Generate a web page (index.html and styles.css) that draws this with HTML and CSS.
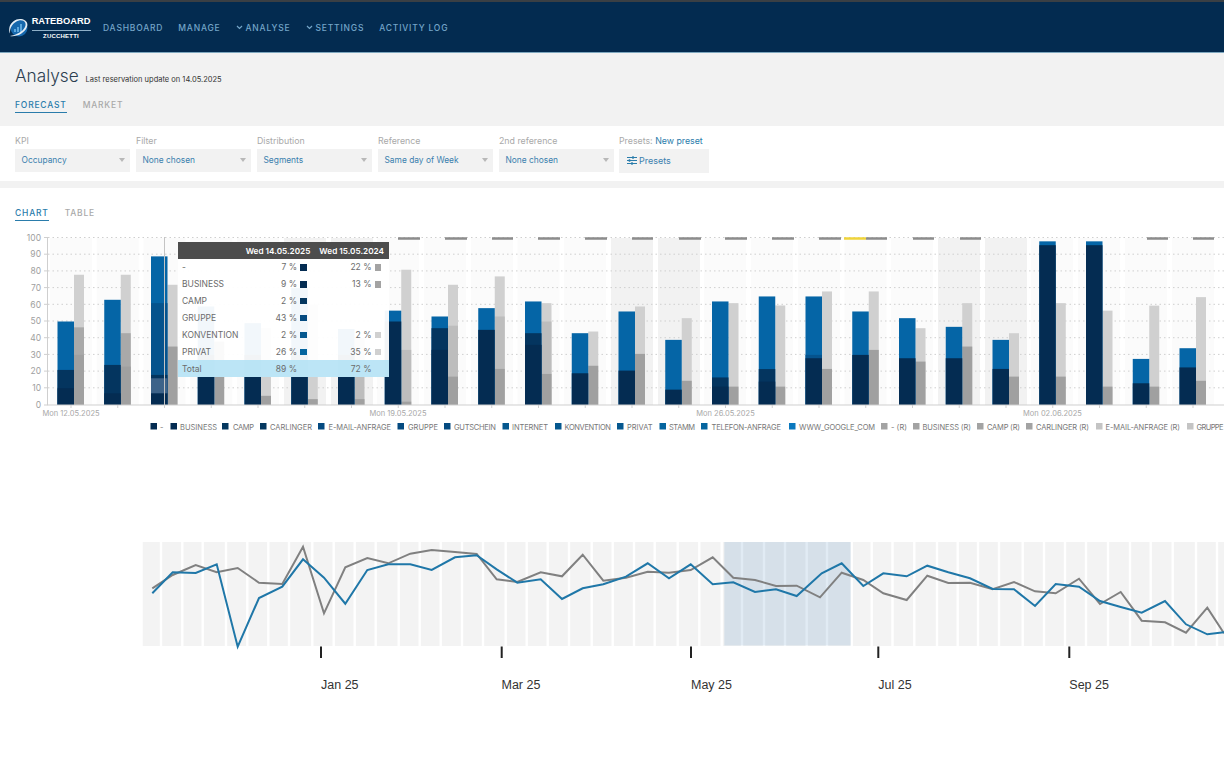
FILE: index.html
```html
<!DOCTYPE html>
<html lang="en">
<head>
<meta charset="utf-8">
<title>Rateboard – Analyse</title>
<link rel="stylesheet" href="styles.css">
</head>
<body>
<nav class="topbar">
  <div class="logo">
    <svg class="logo-mark" viewBox="0 0 22 22" width="22" height="22">
      <circle cx="11" cy="11" r="8.5" class="orb"/>
      <path d="M6 15v-3h2v3zM9 15v-5h2v5zM12 15V7h2v8z" class="orb-bars"/>
      <path d="M2 19C8 20 16 17 19 10 20.500 6 18 2.500 13 2 8 1.500 3 5 1.500 10 1 12 1 15 2 16.500 1.500 11 5 5 11 3.500 16 2.500 19 6 17 10 14.500 15 8 18 2 19z" class="swoosh"/>
    </svg>
    <div class="logo-text">
      <span class="logo-name">RATEBOARD</span>
      <span class="logo-sub">ZUCCHETTI</span>
    </div>
  </div>
  <ul class="menu">
    <li class="menu-item">DASHBOARD</li>
    <li class="menu-item">MANAGE</li>
    <li class="menu-item"><svg class="chev" viewBox="0 0 7 5" width="7" height="5"><path d="M1 1l2.500 2.500L6 1"/></svg>ANALYSE</li>
    <li class="menu-item"><svg class="chev" viewBox="0 0 7 5" width="7" height="5"><path d="M1 1l2.500 2.500L6 1"/></svg>SETTINGS</li>
    <li class="menu-item">ACTIVITY LOG</li>
  </ul>
</nav>

<header class="page-head">
  <div class="title-row">
    <h1 class="title">Analyse</h1>
    <span class="updated">Last reservation update on 14.05.2025</span>
  </div>
  <div class="tabs">
    <span class="tab active">FORECAST</span>
    <span class="tab">MARKET</span>
  </div>
</header>

<section class="filters">
  <div class="field"><label class="field-label">KPI</label><div class="select">Occupancy<i class="caret"></i></div></div>
  <div class="field"><label class="field-label">Filter</label><div class="select">None chosen<i class="caret"></i></div></div>
  <div class="field"><label class="field-label">Distribution</label><div class="select">Segments<i class="caret"></i></div></div>
  <div class="field"><label class="field-label">Reference</label><div class="select">Same day of Week<i class="caret"></i></div></div>
  <div class="field"><label class="field-label">2nd reference</label><div class="select">None chosen<i class="caret"></i></div></div>
  <div class="field presets"><label class="field-label">Presets: <a class="link">New preset</a></label>
    <div class="preset-btn">
      <svg class="sliders" viewBox="0 0 10 9" width="10" height="9"><path d="M0 1.500h10M0 4.500h10M0 7.500h10"/><path class="knob" d="M6 .3v2.400M2.500 3.300v2.400M5 6.300v2.400"/></svg>
      Presets
    </div>
  </div>
</section>
<div class="band"></div>

<div class="tabs chart-tabs">
  <span class="tab active">CHART</span>
  <span class="tab">TABLE</span>
</div>

<section class="chart">
  <svg class="bars" viewBox="0 228 1224 208" width="1224" height="208">
    <g transform="translate(0 405) scale(1 -1.67)">
      <g class="cols">
        <rect x="50" width="42" height="100"/><rect x="96.750" width="42" height="100"/><rect x="143.500" width="42" height="100"/><rect x="190.250" width="42" height="100"/><rect x="237" width="42" height="100"/>
        <rect class="wk" x="284" width="42" height="100"/><rect class="wk" x="331" width="42" height="100"/>
        <rect x="377" width="42" height="100"/><rect x="424" width="42" height="100"/><rect x="471" width="42" height="100"/><rect x="517.500" width="42" height="100"/><rect x="564" width="42" height="100"/>
        <rect class="wk" x="611" width="42" height="100"/><rect class="wk" x="658" width="42" height="100"/>
        <rect x="704" width="42" height="100"/><rect x="751" width="42" height="100"/><rect x="798" width="42" height="100"/><rect x="844.500" width="42" height="100"/><rect x="891" width="42" height="100"/>
        <rect class="wk" x="938" width="42" height="100"/><rect class="wk" x="985" width="42" height="100"/>
        <rect x="1031" width="42" height="100"/><rect x="1078" width="42" height="100"/><rect x="1125" width="42" height="100"/><rect x="1172" width="42" height="100"/>
      </g>
    </g>
    <g class="grid">
      <path d="M48 237.500H1224M48 254.200H1224M48 270.900H1224M48 287.600H1224M48 304.300H1224M48 321H1224M48 337.700H1224M48 354.400H1224M48 371.100H1224M48 387.800H1224"/>
    </g>
    <g transform="translate(0 405) scale(1 -1.67)">
      <g transform="translate(71)"><rect class="r rl" height="78"/><rect class="r rn" height="46.500"/><rect class="r rm" height="30"/><rect class="m c3" height="50"/><rect class="m c1b" height="21"/><rect class="m c1" height="10"/></g>
      <g transform="translate(117.750)"><rect class="r rl" height="78"/><rect class="r rn" height="43"/><rect class="r rm" height="23"/><rect class="m c3" height="63"/><rect class="m c1b" height="24"/><rect class="m c1" height="7"/></g>
      <g transform="translate(164.500)"><rect class="r rl" height="72"/><rect class="r rm" height="35"/><rect class="m c3" height="89"/><rect class="m c2" height="61"/><rect class="m c1b" height="18"/><rect class="m c-p" height="16"/><rect class="m c1" height="7"/></g>
      <g transform="translate(211.250)"><rect class="r rm" height="38"/><rect class="m c3" height="59"/><rect class="m c1" height="30"/></g>
      <g transform="translate(258)"><rect class="r rl" height="46"/><rect class="r rm" height="5.500"/><rect class="m c3" height="49"/><rect class="m c1" height="30"/></g>
      <g transform="translate(304.750)"><rect class="r rl" height="60"/><rect class="r rm" height="3.500"/><rect class="m c3" height="70"/><rect class="m c1" height="30"/></g>
      <g transform="translate(351.500)"><rect class="r rs" height="40"/><rect class="r rm" height="3.500"/><rect class="m c3" height="45.500"/><rect class="m c1" height="30"/></g>
      <g transform="translate(398.250)"><rect class="r rl" height="81"/><rect class="r rs" height="33"/><rect class="r rm" height="2"/><rect class="m c3" height="56.500"/><rect class="m c1" height="50"/></g>
      <g transform="translate(445)"><rect class="r rl" height="72"/><rect class="r rs" height="47.500"/><rect class="r rm" height="17"/><rect class="m c3" height="53"/><rect class="m c1b" height="46"/><rect class="m c1" height="33"/></g>
      <g transform="translate(491.750)"><rect class="r rl" height="77"/><rect class="r rs" height="53"/><rect class="r rm" height="21.600"/><rect class="m c3" height="58"/><rect class="m c1" height="45"/></g>
      <g transform="translate(538.500)"><rect class="r rl" height="61"/><rect class="r rs" height="50"/><rect class="r rm" height="18.600"/><rect class="m c3" height="62"/><rect class="m c1b" height="43"/><rect class="m c1" height="36"/></g>
      <g transform="translate(585.250)"><rect class="r rl" height="44"/><rect class="r rm" height="23.500"/><rect class="m c3" height="43"/><rect class="m c1" height="19"/></g>
      <g transform="translate(632)"><rect class="r rl" height="59"/><rect class="r rm" height="30.600"/><rect class="m c3" height="56"/><rect class="m c1" height="20.600"/></g>
      <g transform="translate(678.750)"><rect class="r rl" height="52"/><rect class="r rm" height="14.500"/><rect class="m c3" height="39"/><rect class="m c1" height="9.200"/></g>
      <g transform="translate(725.500)"><rect class="r rl" height="61"/><rect class="r rm" height="11"/><rect class="m c3" height="62"/><rect class="m c1b" height="16.500"/><rect class="m c1" height="11"/></g>
      <g transform="translate(772.250)"><rect class="r rl" height="59.600"/><rect class="r rm" height="11"/><rect class="m c3" height="65"/><rect class="m c1b" height="21.500"/><rect class="m c1" height="14"/></g>
      <g transform="translate(819)"><rect class="r rl" height="68"/><rect class="r rm" height="21.600"/><rect class="m c3" height="65"/><rect class="m c2" height="30"/><rect class="m c1" height="28"/></g>
      <g transform="translate(865.750)"><rect class="r rl" height="68"/><rect class="r rm" height="33"/><rect class="m c3" height="56"/><rect class="m c1" height="30"/></g>
      <g transform="translate(912.500)"><rect class="r rl" height="46"/><rect class="r rm" height="26"/><rect class="m c3" height="52"/><rect class="m c1" height="28"/></g>
      <g transform="translate(959.250)"><rect class="r rl" height="61"/><rect class="r rm" height="35"/><rect class="m c3" height="46.800"/><rect class="m c1" height="28"/></g>
      <g transform="translate(1006)"><rect class="r rl" height="43"/><rect class="r rm" height="17"/><rect class="m c3" height="39"/><rect class="m c1" height="21.600"/></g>
      <g transform="translate(1052.750)"><rect class="r rl" height="61"/><rect class="r rm" height="17"/><rect class="m c3" height="98"/><rect class="m c1" height="95.700"/></g>
      <g transform="translate(1099.500)"><rect class="r rl" height="56.500"/><rect class="r rm" height="11"/><rect class="m c3" height="98"/><rect class="m c1" height="95.700"/></g>
      <g transform="translate(1146.250)"><rect class="r rl" height="59.500"/><rect class="r rm" height="11"/><rect class="m c3" height="27.600"/><rect class="m c1" height="13"/></g>
      <g transform="translate(1193)"><rect class="r rl" height="64.600"/><rect class="r rm" height="14.500"/><rect class="m c3" height="34"/><rect class="m c1" height="22.500"/></g>
    </g>
    <path class="hover-line" d="M164.500 237V405"/>
    <path class="flags" d="M398 238.500h22M445 238.500h22M492 238.500h21M538 238.500h22M585 238.500h22M632 238.500h21M679 238.500h22M725 238.500h22M772 238.500h22M819 238.500h22M866 238.500h21M913 238.500h21M960 238.500h21M1147 238.500h21M1193 238.500h21"/>
    <path class="flag-y" d="M844 238.500h22"/>
    <path class="axis" d="M47.500 237V405H1224M44 237.500h4M44 254.200h4M44 270.900h4M44 287.600h4M44 304.300h4M44 321h4M44 337.700h4M44 354.400h4M44 371.100h4M44 387.800h4M44 405h4"/>
    <path class="axis" d="M71 405v3M117.750 405v3M164.500 405v3M211.250 405v3M258 405v3M304.750 405v3M351.500 405v3M398.250 405v3M445 405v3M491.750 405v3M538.500 405v3M585.250 405v3M632 405v3M678.750 405v3M725.500 405v3M772.250 405v3M819 405v3M865.750 405v3M912.500 405v3M959.250 405v3M1006 405v3M1052.750 405v3M1099.500 405v3M1146.250 405v3M1193 405v3"/>
    <g class="ylab">
      <text x="41" y="240.500">100</text><text x="41" y="257">90</text><text x="41" y="274">80</text><text x="41" y="291">70</text><text x="41" y="307.500">60</text><text x="41" y="324">50</text><text x="41" y="341">40</text><text x="41" y="357.500">30</text><text x="41" y="374">20</text><text x="41" y="391">10</text><text x="41" y="408">0</text>
    </g>
    <g class="xlab">
      <text x="71" y="416">Mon 12.05.2025</text><text x="398" y="416">Mon 19.05.2025</text><text x="725.500" y="416">Mon 26.05.2025</text><text x="1052.500" y="416">Mon 02.06.2025</text>
    </g>
    <g class="legend">
      <rect class="sw s1" x="150.500" y="423"/><text x="160" y="429.500">-</text>
      <rect class="sw s1" x="170.500" y="423"/><text x="180" y="429.500" textLength="37">BUSINESS</text>
      <rect class="sw s2" x="222" y="423"/><text x="233" y="429.500" textLength="21">CAMP</text>
      <rect class="sw s2" x="260" y="423"/><text x="270" y="429.500" textLength="42">CARLINGER</text>
      <rect class="sw s3" x="318" y="423"/><text x="328.500" y="429.500" textLength="62.500">E-MAIL-ANFRAGE</text>
      <rect class="sw s3" x="397.500" y="423"/><text x="408" y="429.500" textLength="30">GRUPPE</text>
      <rect class="sw s3" x="444" y="423"/><text x="454" y="429.500" textLength="42">GUTSCHEIN</text>
      <rect class="sw s4" x="502.500" y="423"/><text x="512" y="429.500" textLength="36">INTERNET</text>
      <rect class="sw s4" x="555" y="423"/><text x="564.500" y="429.500" textLength="46.500">KONVENTION</text>
      <rect class="sw s4" x="617" y="423"/><text x="627" y="429.500" textLength="25.500">PRIVAT</text>
      <rect class="sw s5" x="659.500" y="423"/><text x="669" y="429.500" textLength="26">STAMM</text>
      <rect class="sw s5" x="701" y="423"/><text x="711.500" y="429.500" textLength="69.500">TELEFON-ANFRAGE</text>
      <rect class="sw s6" x="789" y="423"/><text x="799" y="429.500" textLength="76">WWW_GOOGLE_COM</text>
      <rect class="sw r1" x="881" y="423"/><text x="891" y="429.500" textLength="16">- (R)</text>
      <rect class="sw r1" x="913" y="423"/><text x="922.500" y="429.500" textLength="48.500">BUSINESS (R)</text>
      <rect class="sw r1" x="977" y="423"/><text x="987" y="429.500" textLength="33">CAMP (R)</text>
      <rect class="sw r1" x="1026" y="423"/><text x="1036" y="429.500" textLength="53">CARLINGER (R)</text>
      <rect class="sw r2" x="1096" y="423"/><text x="1105.500" y="429.500" textLength="74.500">E-MAIL-ANFRAGE (R)</text>
      <rect class="sw r2" x="1187" y="423"/><text x="1196.500" y="429.500" textLength="27">GRUPPE</text>
    </g>
  </svg>

  <div class="tooltip">
    <div class="tip-head"><span>Wed 14.05.2025</span><span>Wed 15.05.2024</span></div>
    <div class="tip-row"><span>-</span><span class="num">7 %</span><i class="sq s1"></i><span class="num">22 %</span><i class="sq r1"></i></div>
    <div class="tip-row"><span>BUSINESS</span><span class="num">9 %</span><i class="sq s1"></i><span class="num">13 %</span><i class="sq r1"></i></div>
    <div class="tip-row"><span>CAMP</span><span class="num">2 %</span><i class="sq s2"></i></div>
    <div class="tip-row"><span>GRUPPE</span><span class="num">43 %</span><i class="sq s3"></i></div>
    <div class="tip-row"><span>KONVENTION</span><span class="num">2 %</span><i class="sq s4"></i><span class="num">2 %</span><i class="sq r3"></i></div>
    <div class="tip-row"><span>PRIVAT</span><span class="num">26 %</span><i class="sq s5"></i><span class="num">35 %</span><i class="sq r3"></i></div>
    <div class="tip-row tip-total"><span>Total</span><span class="num">89 %</span><i class="sq none"></i><span class="num">72 %</span><i class="sq none"></i></div>
  </div>
</section>

<section class="overview">
  <svg viewBox="0 536 1224 164" width="1224" height="164">
    <path class="ov-cols" d="M142.700 542H159.800V646H142.700zM162.200 542H181.100V646H162.200zM183.500 542H201.500V646H183.500zM203.900 542H224.800V646H203.900zM227.200 542H246.100V646H227.200zM248.500 542H267.100V646H248.500zM269.500 542H287.800V646H269.500zM290.200 542H311.100V646H290.200zM313.500 542H332.500V646H313.500zM334.900 542H353.500V646H334.900zM355.900 542H374.500V646H355.900zM376.900 542H397.500V646H376.900zM399.900 542H418.500V646H399.900zM420.900 542H439.500V646H420.900zM441.900 542H460.800V646H441.900zM463.200 542H481.800V646H463.200zM484.200 542H504.500V646H484.200zM506.900 542H525.500V646H506.900zM527.900 542H546.500V646H527.900zM548.900 542H567.800V646H548.900zM570.200 542H590.500V646H570.200zM592.900 542H611.500V646H592.900zM613.900 542H632.800V646H613.900zM635.200 542H653.500V646H635.200zM655.900 542H676.500V646H655.900zM678.900 542H698.100V646H678.900zM700.500 542H720.500V646H700.500zM722.900 542H740.800V646H722.900zM743.200 542H762.800V646H743.200zM765.200 542H783.800V646H765.200zM786.200 542H805.500V646H786.200zM807.900 542H825.800V646H807.900zM828.200 542H850.500V646H828.200zM852.900 542H870.500V646H852.900zM872.900 542H891.300V646H872.900zM893.700 542H913.100V646H893.700zM915.500 542H935.800V646H915.500zM938.200 542H956.500V646H938.200zM958.900 542H976.800V646H958.900zM979.200 542H997.800V646H979.200zM1000.200 542H1021.500V646H1000.200zM1023.900 542H1042.800V646H1023.900zM1045.200 542H1063.800V646H1045.200zM1066.200 542H1084.800V646H1066.200zM1087.200 542H1106.800V646H1087.200zM1109.200 542H1128.800V646H1109.200zM1131.200 542H1149.500V646H1131.200zM1151.900 542H1171.500V646H1151.900zM1173.900 542H1194.800V646H1173.900zM1197.200 542H1215.800V646H1197.200zM1218.200 542H1224V646H1218.200z"/>
    <rect class="ov-sel" x="724.300" y="542" width="126.400" height="103.500"/>
    <polyline class="ln-gray" points="152.300,588.300 172.700,575 195.700,565 216.700,572.300 237.700,568 259,582.700 282.300,584 303,546.700 324,613.300 345.300,567.300 367.300,558 388.300,563.300 410.300,553.700 431.700,550 455,552 476.700,554 496.700,579.300 517.300,582 540.700,572.300 562,576.300 582.700,554.700 603.300,580.700 626,577.700 647.700,571.700 669,572.700 690.700,570 712.700,557.300 733.300,577.700 755,580 776,586 796.700,585.700 820,597.300 841.700,572.700 863.300,580 883.300,593.300 906.700,600 927.300,575.700 948.300,583 970,582.700 992.700,589.300 1014,582 1035,591.300 1055.700,593.300 1079,578.700 1100,604 1120.700,592 1141.700,620.700 1165,622.300 1186,632.700 1207.300,607.700 1224,633.300"/>
    <polyline class="ln-blue" points="152.300,593.300 172.700,572.300 195.700,573 216.700,564.300 237.700,646.700 259,598 282.300,586.700 303,559.300 324,577.700 345.300,603.700 367.300,570 388.300,564.300 410.300,564.300 431.700,570 455,557.300 476.700,555.300 496.700,569.300 517.300,582.700 540.700,579.300 562,599 582.700,588.300 603.300,584.300 626,576.700 647.700,563.300 669,578.300 690.700,564.300 712.700,584.300 733.300,582.300 755,592 776,589.300 796.700,596 821.700,573.300 841.700,563.300 863.300,586 883.300,573.300 906.700,576.300 927.300,565.700 948.300,572.300 970,578.300 992.700,589 1014,589.300 1035,606 1055.700,584 1079,586.700 1100,601 1120.700,607 1141.700,612.700 1165,601 1186,624.300 1207.300,634.300 1224,632.300"/>
    <path class="ov-ticks" d="M321 646.500V658M501.700 646.500V658M691 646.500V658M878.300 646.500V658M1069.300 646.500V658"/>
    <g class="ov-lab">
      <text x="321" y="688.500">Jan 25</text><text x="501.500" y="688.500">Mar 25</text><text x="691" y="688.500">May 25</text><text x="878.300" y="688.500">Jul 25</text><text x="1069.300" y="688.500">Sep 25</text>
    </g>
  </svg>
</section>
</body>
</html>
```

FILE: styles.css
```css
* { box-sizing: border-box; }
html, body { margin: 0; padding: 0; background: #fff; }
body { width: 1224px; height: 768px; overflow: hidden; font-family: Inter, "Noto Sans", "Liberation Sans", sans-serif; color: #333; }

.topbar { height: 53px; background: #032b50; border-top: 2px solid #3a3f44; border-bottom: 1px solid #7fa8bf; display: flex; align-items: center; padding-left: 9px; }
.logo { display: flex; align-items: center; width: 94px; margin-top: 1px; }
.logo-mark { margin-left: -1px; margin-top: 1px; flex: none; }
.orb { fill: #1668ad; }
.orb-bars { fill: #5da7dd; }
.swoosh { fill: #e6eef5; }
.logo-text { display: flex; flex-direction: column; align-items: center; width: 59px; margin-left: 1.500px; flex: none; }
.logo-name { font: 700 9.300px/13px "Liberation Sans", sans-serif; color: #fff; padding-bottom: 2px; border-bottom: 1px solid #8fb0c8; width: 100%; text-align: center; white-space: nowrap; }
.logo-sub { font: 700 6px/9px "Liberation Sans", sans-serif; color: #fff; margin-top: 1px; letter-spacing: .2px; }
.menu { display: flex; list-style: none; margin: 1px 0 0; padding: 0; gap: 15px; }
.menu-item { font-size: 8.500px; font-weight: 500; letter-spacing: .8px; color: #74a5c8; display: flex; align-items: center; white-space: nowrap; }
.chev { margin-right: 3px; fill: none; stroke: #74a5c8; stroke-width: 1.200; }

.page-head { height: 73px; background: #f2f2f2; padding: 11px 15px 0; }
.title-row { display: flex; align-items: baseline; gap: 7px; }
.title { margin: 0; font-size: 17.200px; line-height: 24px; font-weight: 300; color: #2c3e50; }
.updated { font-size: 7.500px; color: #333; }
.tabs { display: flex; gap: 16px; margin-top: 11px; }
.tab { font-size: 8.500px; font-weight: 500; letter-spacing: .8px; line-height: 12px; color: #a9a9a9; padding-bottom: 1px; }
.tab.active { color: #2a7cab; border-bottom: 1px solid #2a7cab; }

.filters { height: 55px; background: #fff; padding: 9px 15px 0; display: flex; gap: 6.500px; }
.field { width: 114.500px; }
.field-label { display: block; font-size: 8.800px; line-height: 12px; color: #a9a9a9; margin-bottom: 2px; white-space: nowrap; }
.select { height: 23px; background: #f2f2f2; color: #3a7fae; font-size: 8.400px; line-height: 22px; padding-left: 6.500px; position: relative; }
.caret { position: absolute; right: 5px; top: 9px; width: 0; height: 0; border-left: 3.500px solid transparent; border-right: 3.500px solid transparent; border-top: 4px solid #b8b8b8; }
.presets { width: 89.500px; margin-left: -1px; }
.link { color: #2a7cab; }
.preset-btn { height: 23.500px; background: #f2f2f2; color: #3a7fae; font-size: 9px; display: flex; align-items: center; gap: 2px; padding-left: 8px; }
.sliders { fill: none; stroke: #2a7cab; stroke-width: 1; }
.knob { stroke-width: 1.600; }

.band { height: 7px; background: #f2f2f2; }
.chart-tabs { height: 40px; padding: 19px 15px 0; margin-top: 0; align-items: flex-start; }

.chart { position: relative; height: 208px; }
.bars, .overview svg { display: block; }
.cols rect { fill: #fbfbfb; }
.cols .wk { fill: #f2f2f2; }
.grid path { fill: none; stroke: #cfcfcf; stroke-width: 1; stroke-dasharray: 1.500 3; }
.m { x: -13.500px; width: 16.500px; }
.r { x: 3px; width: 10px; }
.c3 { fill: #0565a6; }
.c2 { fill: #05538d; }
.c1 { fill: #042c52; }
.c1b { fill: #04355f; }
.c-p { fill: #3d6389; }
.rl { fill: #d0d0d0; }
.rs { fill: #bdbdbd; }
.rn { fill: #a9a9a9; }
.rm { fill: #a0a0a0; }
.hover-line { stroke: #c4c4c4; stroke-width: 1; }
.flags { fill: none; stroke: #8c8c8c; stroke-width: 2.500; }
.flag-y { fill: none; stroke: #f0d43a; stroke-width: 2.500; }
.axis { fill: none; stroke: #cfcfcf; stroke-width: 1; }
.ylab text { font-size: 8.500px; fill: #a0a0a0; text-anchor: end; }
.xlab text { font-size: 7.500px; fill: #a8a8a8; text-anchor: middle; }
.legend text { font-size: 7.500px; fill: #777; }
.sw { width: 6.500px; height: 6.500px; }
.s1 { fill: #042c52; background: #042c52; }
.s2 { fill: #04375f; background: #04375f; }
.s3 { fill: #044a80; background: #044a80; }
.s4 { fill: #05588f; background: #05588f; }
.s5 { fill: #05659f; background: #05659f; }
.s6 { fill: #0a78be; }
.r1 { fill: #a3a3a3; background: #a3a3a3; }
.r2 { fill: #c4c4c4; }
.r3 { background: #d0d0d0; }

.tooltip { position: absolute; left: 177.500px; top: 14px; width: 211.500px; background: rgba(255,255,255,.95); font-size: 8.500px; color: #6b6b6b; }
.tip-head { height: 17px; background: #4d4d4d; color: #fff; font-weight: 600; display: flex; justify-content: flex-end; align-items: center; gap: 9px; padding-right: 5px; font-size: 8.200px; }
.tip-row { height: 16.900px; display: grid; grid-template-columns: 86px 29px 3px 6.500px 65px 3px 6.500px; align-items: center; padding-left: 4.500px; white-space: nowrap; }
.num { text-align: right; }
.sq { width: 6.500px; height: 6.500px; display: block; }
.tip-row .num:nth-child(2) { grid-column: 2; }
.tip-row .sq:nth-child(3) { grid-column: 4; }
.tip-row .num:nth-child(4) { grid-column: 5; }
.tip-row .sq:nth-child(5) { grid-column: 7; }
.tip-total { background: rgba(176,224,245,.85); }
.none { background: none; }

.overview { margin-top: 100px; }
.ov-cols { fill: #f3f3f3; }
.ov-sel { fill: rgba(51,119,179,.15); }
.ln-gray, .ln-blue { fill: none; stroke-width: 2; stroke-linejoin: miter; }
.ln-gray { stroke: #808080; }
.ln-blue { stroke: #1f77a8; }
.ov-ticks { fill: none; stroke: #222; stroke-width: 2; }
.ov-lab text { font-family: "Liberation Sans", Arial, sans-serif; font-size: 12.500px; fill: #333; }
```
